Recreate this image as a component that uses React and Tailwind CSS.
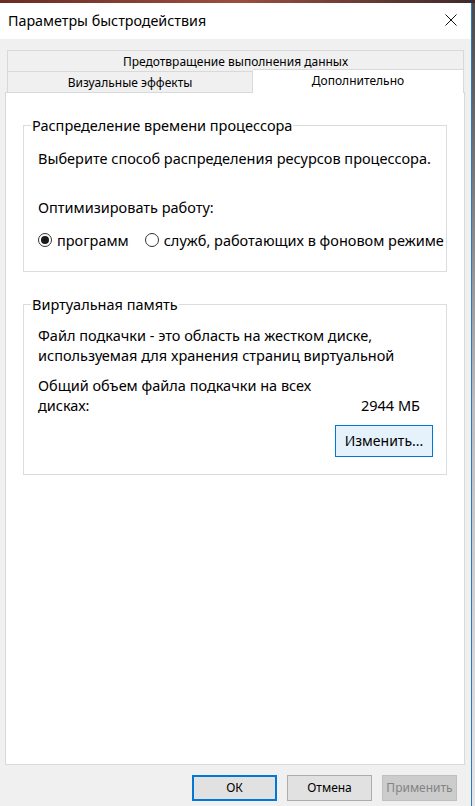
const Radio = ({ checked, label }) => (
  <label className="flex items-center gap-[5px]">
    <span className="flex h-[14px] w-[14px] items-center justify-center rounded-full border border-[#333333] bg-white">
      {checked && <span className="h-[8px] w-[8px] rounded-full bg-[#1a1a1a]" />}
    </span>
    <span>{label}</span>
  </label>
);

const GroupBox = ({ title, className = '', children }) => (
  <fieldset className={`mx-[17px] border border-[#dcdcdc] px-0 ${className}`}>
    <legend className="ml-[7px] px-[1px] leading-[20px]">{title}</legend>
    {children}
  </fieldset>
);

export default function App() {
  return (
    <div
      className="flex h-[806px] w-[475px] flex-col overflow-hidden text-[14.5px] text-black"
      style={{ fontFamily: '"Noto Sans", "Liberation Sans", sans-serif' }}
    >
      <div className="h-[3px] bg-gradient-to-r from-[#6b2c24] via-[#9c4e3e] to-[#3e2a2a]" />
      <div className="flex flex-1">
        <div className="flex w-[472px] flex-col border-r border-[#2b79c2] bg-[#f0f0f0]">
          {/* title bar */}
          <div className="flex h-[36px] items-center justify-between bg-white pl-[8px] pr-[14px]">
            <span className="text-[14.3px]">Параметры быстродействия</span>
            <svg width="12" height="12" viewBox="0 0 12 12" className="mt-[-2px]">
              <path d="M0.5 0.5 L11.5 11.5 M11.5 0.5 L0.5 11.5" stroke="#111" strokeWidth="1" fill="none" />
            </svg>
          </div>

          <div className="flex flex-1 flex-col pt-[11px]">
            {/* tabs */}
            <div className="ml-[7px] w-[457px] text-[12px]">
              <div className="flex h-[21px] items-center justify-center border border-b-0 border-[#d9d9d9] bg-[#f0f0f0] pt-[1px]">
                Предотвращение выполнения данных
              </div>
              <div className="flex h-[21px]">
                <div className="flex w-[246px] items-center justify-center border border-b-0 border-[#d9d9d9] bg-[#f0f0f0] pt-[2px]">
                  Визуальные эффекты
                </div>
                <div className="relative z-10 -mt-[2px] flex h-[24px] flex-1 items-center justify-center border border-b-0 border-l-0 border-[#d9d9d9] bg-white pb-[2px]">
                  Дополнительно
                </div>
              </div>
            </div>

            {/* panel */}
            <div className="ml-[5px] flex-1 w-[460px] border border-[#d9d9d9] bg-white">
              <GroupBox title="Распределение времени процессора" className="mt-[22px]">
                <div className="pb-[21px] pl-[14px] leading-[20px]">
                  <div className="mt-[13px]">Выберите способ распределения ресурсов процессора.</div>
                  <div className="mt-[29px]">Оптимизировать работу:</div>
                  <div className="mt-[13px] flex items-center gap-[16px]">
                    <Radio checked label="программ" />
                    <Radio label="служб, работающих в фоновом режиме" />
                  </div>
                </div>
              </GroupBox>

              <GroupBox title="Виртуальная память" className="mt-[22px]">
                <div className="pb-[17px] pl-[14px] pr-[13px] leading-[20px]">
                  <div className="mt-[11px]">
                    Файл подкачки - это область на жестком диске,
                    <br />
                    используемая для хранения страниц виртуальной
                  </div>
                  <div className="mt-[10px] flex items-end justify-between pr-[13px]">
                    <div>
                      Общий объем файла подкачки на всех
                      <br />
                      дисках:
                    </div>
                    <div>2944 МБ</div>
                  </div>
                  <div className="mt-[10px] flex justify-end">
                    <button className="h-[32px] w-[98px] border border-[#0078d7] bg-[#e5f1fb] text-[14px]">
                      Изменить...
                    </button>
                  </div>
                </div>
              </GroupBox>
            </div>

            {/* buttons */}
            <div className="mb-[5px] mt-[10px] flex h-[26px] justify-end gap-[10px] pr-[14px] text-[12px]">
              <button className="w-[85px] border-2 border-[#0078d7] bg-[#e1e1e1]">ОК</button>
              <button className="w-[85px] border border-[#adadad] bg-[#e1e1e1]">Отмена</button>
              <button className="w-[75px] border border-[#bfbfbf] bg-[#cccccc] text-[#838383]">Применить</button>
            </div>
          </div>
        </div>
        <div className="flex-1 bg-gradient-to-b from-[#4a4a4a] via-[#bdbdbd] to-[#e6e6e6]" />
      </div>
    </div>
  );
}
